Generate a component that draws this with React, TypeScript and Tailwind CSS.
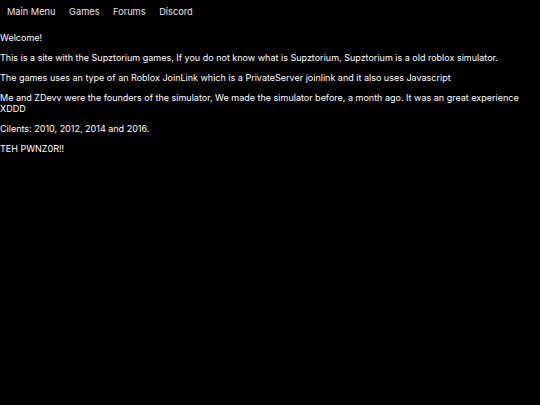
export default function App() {
  return (
    <div className="min-h-screen bg-black text-white font-['Inter',sans-serif] text-[9px] leading-[11px]">
      <nav className="flex h-[23px] items-center pl-[0.25px] text-[9.25px] text-[#e6e6e6]">
        <a className="px-[6.75px]">Main Menu</a>
        <a className="px-[6.75px]">Games</a>
        <a className="px-[6.75px]">Forums</a>
        <a className="px-[6.75px]">Discord</a>
      </nav>
      <div className="flex flex-col gap-[9px] pt-[9px]">
        <p>Welcome!</p>
        <p>This is a site with the Supztorium games, If you do not know what is Supztorium, Supztorium is a old roblox simulator.</p>
        <p>The games uses an type of an Roblox JoinLink which is a PrivateServer joinlink and it also uses Javascript</p>
        <p>Me and ZDevv were the founders of the simulator, We made the simulator before, a month ago. It was an great experience XDDD</p>
        <p>Cilents: 2010, 2012, 2014 and 2016.</p>
        <p>TEH PWNZ0R!!</p>
      </div>
    </div>
  )
}
